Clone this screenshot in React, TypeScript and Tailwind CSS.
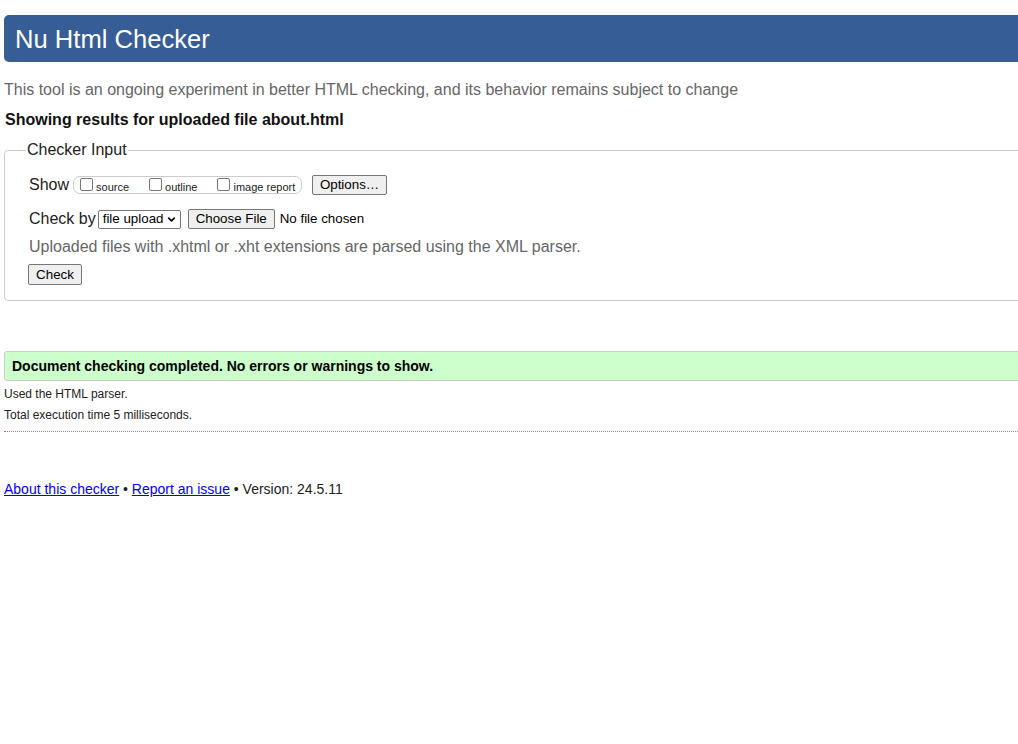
import { ChevronDown } from 'lucide-react';

function Box({ label }: { label: string }) {
  return (
    <span className="flex items-center">
      <span className="mt-[-2px] h-[13px] w-[13px] rounded-[2px] border border-[#767676] bg-white" />
      <span className="ml-[3px] mt-[4px] text-[11px] leading-[13px]">{label}</span>
    </span>
  );
}

function Btn({ children, className = '' }: { children: React.ReactNode; className?: string }) {
  return (
    <span
      className={`flex items-center justify-center rounded-[2px] border border-[#767676] bg-[#efefef] text-[13.33px] leading-none text-black ${className}`}
    >
      {children}
    </span>
  );
}

export default function App() {
  return (
    <div className="h-[744px] w-[1018px] overflow-hidden bg-white font-['Liberation_Sans',Arial,sans-serif] text-[16px] leading-[20px] text-[#222]">
      <div className="w-[1100px]">
        {/* header */}
        <div className="ml-[4px] mt-[15px] flex h-[47px] items-center rounded-l-[5px] bg-[#365d95] pl-[11px] text-[25.6px] text-white">
          Nu Html Checker
        </div>

        <p className="ml-[4px] mt-[18px] text-[#666]">
          This tool is an ongoing experiment in better HTML checking, and its behavior remains subject to change
        </p>
        <p className="ml-[5px] mt-[10px] font-bold text-[#111]">Showing results for uploaded file about.html</p>

        {/* checker input */}
        <fieldset className="ml-[4px] mt-[10px] rounded-l-[4px] border border-[#cccccc] pb-[15px] pl-[24px]">
          <legend className="-ml-[3px] px-[1px] leading-[20px]">Checker Input</legend>

          <div className="mt-[13px] flex h-[24px] items-center">
            <span>Show</span>
            <span className="ml-[4px] flex h-[18px] w-[229px] items-center rounded-[7px] border border-[#cccccc] pl-[6px]">
              <Box label="source" />
              <span className="w-[20px]" />
              <Box label="outline" />
              <span className="w-[20px]" />
              <Box label="image report" />
            </span>
            <Btn className="ml-[10px] h-[20px] w-[75px]">Options…</Btn>
          </div>

          <div className="mt-[11px] flex h-[22px] items-center">
            <span>Check by</span>
            <span className="ml-[2px] flex h-[19px] w-[83px] items-center justify-between rounded-[2px] border border-[#767676] pl-[4px] pr-[3px] text-[13.33px] leading-none text-black">
              file upload
              <ChevronDown size={11} strokeWidth={3.5} />
            </span>
            <Btn className="ml-[7px] h-[20px] w-[87px]">Choose File</Btn>
            <span className="ml-[5px] text-[13.33px] text-black">No file chosen</span>
          </div>

          <p className="mt-[7px] text-[#666]">Uploaded files with .xhtml or .xht extensions are parsed using the XML parser.</p>

          <Btn className="mt-[7px] h-[21px] w-[54px] -ml-[1px]">Check</Btn>
        </fieldset>

        {/* result */}
        <div className="ml-[4px] mt-[50px] flex h-[30px] items-center rounded-l-[3px] border border-[#cccccc] bg-[#ccffcc] pl-[7px] text-[14px] font-bold text-black">
          Document checking completed. No errors or warnings to show.
        </div>
        <p className="ml-[4px] mt-[5px] text-[12px] leading-[16px]">Used the HTML parser.</p>
        <p className="ml-[4px] mt-[5px] text-[12px] leading-[16px]">Total execution time 5 milliseconds.</p>
        <div className="ml-[4px] mt-[8px] border-t border-dotted border-[#888]" />

        {/* footer */}
        <p className="ml-[4px] mt-[48px] text-[14px] leading-[18px]">
          <a href="#" className="text-[#0000ee] underline">About this checker</a>
          {' • '}
          <a href="#" className="text-[#0000ee] underline">Report an issue</a>
          {' • Version: 24.5.11'}
        </p>
      </div>
    </div>
  );
}
